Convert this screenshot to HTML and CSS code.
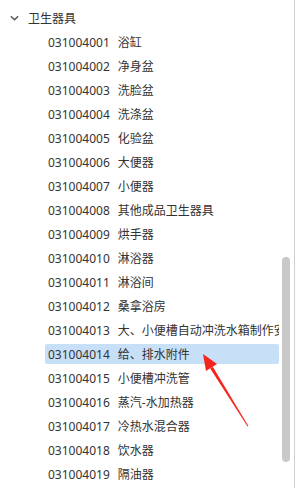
FILE: index.html
```html
<!DOCTYPE html>
<html lang="zh-CN">
<head>
  <meta charset="UTF-8">
  <title>卫生器具</title>
  <link rel="stylesheet" href="styles.css">
</head>
<body>
  <div class="panel">
    <div class="tree">
      <div class="tree-group">
        <svg class="chevron" viewBox="0 0 10 6">
          <path d="M1 1l4 4 4-4"/>
        </svg>
        卫生器具
      </div>
      <div class="tree-item"><span class="code">031004001</span><span class="name">浴缸</span></div>
      <div class="tree-item"><span class="code">031004002</span><span class="name">净身盆</span></div>
      <div class="tree-item"><span class="code">031004003</span><span class="name">洗脸盆</span></div>
      <div class="tree-item"><span class="code">031004004</span><span class="name">洗涤盆</span></div>
      <div class="tree-item"><span class="code">031004005</span><span class="name">化验盆</span></div>
      <div class="tree-item"><span class="code">031004006</span><span class="name">大便器</span></div>
      <div class="tree-item"><span class="code">031004007</span><span class="name">小便器</span></div>
      <div class="tree-item"><span class="code">031004008</span><span class="name">其他成品卫生器具</span></div>
      <div class="tree-item"><span class="code">031004009</span><span class="name">烘手器</span></div>
      <div class="tree-item"><span class="code">031004010</span><span class="name">淋浴器</span></div>
      <div class="tree-item"><span class="code">031004011</span><span class="name">淋浴间</span></div>
      <div class="tree-item"><span class="code">031004012</span><span class="name">桑拿浴房</span></div>
      <div class="tree-item"><span class="code">031004013</span><span class="name">大、小便槽自动冲洗水箱制作安装</span></div>
      <div class="tree-item selected"><span class="code">031004014</span><span class="name">给、排水附件</span></div>
      <div class="tree-item"><span class="code">031004015</span><span class="name">小便槽冲洗管</span></div>
      <div class="tree-item"><span class="code">031004016</span><span class="name">蒸汽-水加热器</span></div>
      <div class="tree-item"><span class="code">031004017</span><span class="name">冷热水混合器</span></div>
      <div class="tree-item"><span class="code">031004018</span><span class="name">饮水器</span></div>
      <div class="tree-item"><span class="code">031004019</span><span class="name">隔油器</span></div>
    </div>
    <div class="scrollbar">
      <div class="thumb"></div>
    </div>
    <div class="edge"></div>
  </div>

  <!-- annotation arrow pointing at the selected row -->
  <svg class="arrow" viewBox="0 0 297 488">
    <polygon points="247.6,426.4 248.4,425.9 212.8,366.8 210.2,368.4"/>
    <polygon points="203,354 217,364 206,371"/>
  </svg>
</body>
</html>
```

FILE: styles.css
```css
* {
  box-sizing: border-box;
  margin: 0;
  padding: 0;
}

body {
  width: 297px;
  height: 488px;
  overflow: hidden;
  background: #fff;
  font-family: 'Noto Sans', 'Noto Sans CJK SC', sans-serif;
  font-size: 12px;
  color: #333;
  position: relative;
}

.panel {
  display: flex;
  height: 488px;
}

.tree {
  width: 279px;
  padding-top: 6px;
  display: flex;
  flex-direction: column;
  overflow: hidden;
  white-space: nowrap;
}

.tree-group {
  height: 24px;
  flex-shrink: 0;
  display: flex;
  align-items: center;
  padding-left: 10px;
}

.chevron {
  width: 9px;
  height: 6px;
  margin-right: 9px;
  fill: none;
  stroke: #555;
  stroke-width: 1.6;
}

.tree-item {
  height: 20px;
  flex-shrink: 0;
  margin: 2px 0 2px 45px;
  padding-left: 3px;
  display: flex;
  align-items: center;
  border-radius: 2px;
}

.tree-item.selected {
  background-color: #c8dff8;
}

.code {
  margin-right: 8px;
}

.scrollbar {
  width: 15px;
  padding: 257px 0 0 3px;
}

.thumb {
  width: 8px;
  height: 205px;
  border-radius: 4px;
  background-color: #c9c9c9;
}

.edge {
  width: 1px;
  background-color: #cfcfcf;
}

.arrow {
  position: absolute;
  top: 0;
  left: 0;
  width: 297px;
  height: 488px;
  fill: #f5241c;
}
```
